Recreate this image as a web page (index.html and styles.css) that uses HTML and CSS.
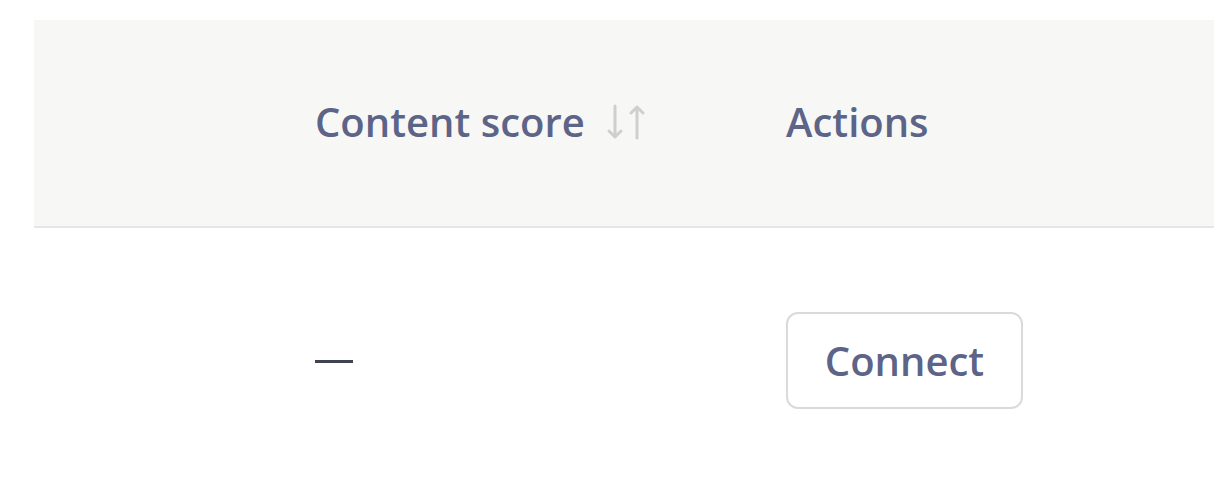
FILE: index.html
```html
<!DOCTYPE html>
<html>
<head>
<meta charset="utf-8">
<link rel="stylesheet" href="styles.css">
</head>
<body>
<div class="table">
  <div class="row head">
    <div class="cell spacer"></div>
    <div class="cell score-col">
      <span class="label">Content score</span>
      <svg class="sort" width="40" height="40" viewBox="0 0 40 40" fill="none" stroke="#cfcfcf" stroke-width="3" stroke-linecap="round" stroke-linejoin="round">
        <path d="M9 4 V35 M3 29 L9 35 L15 29"/>
        <path d="M31 36 V5 M25 11 L31 5 L37 11"/>
      </svg>
    </div>
    <div class="cell actions-col"><span class="label">Actions</span></div>
  </div>
  <div class="row body">
    <div class="cell spacer"></div>
    <div class="cell score-col"><span class="dash"></span></div>
    <div class="cell actions-col"><button class="btn">Connect</button></div>
  </div>
</div>
</body>
</html>
```
FILE: styles.css
```css
html, body {
  margin: 0;
  padding: 0;
  background: #ffffff;
}
body {
  font-family: "Open Sans", "Liberation Sans", sans-serif;
  padding: 20px 8px 0 34px;
}
.table {
  width: 1180px;
}
.row {
  display: grid;
  grid-template-columns: 281px 471px 1fr;
  align-items: center;
}
.head {
  height: 206px;
  background: #f7f7f5;
  border-bottom: 2px solid #e6e6e4;
}
.body {
  height: 264px;
}
.cell {
  display: flex;
  align-items: center;
}
.head .cell {
  margin-top: -4px;
}
.label {
  font-size: 40px;
  font-weight: 600;
  color: #5c6488;
  letter-spacing: 0;
}
.sort {
  margin-left: 21px;
  margin-top: 2px;
}
.dash {
  display: block;
  width: 38px;
  height: 3px;
  background: #3f4352;
  margin-top: 2px;
}
.btn {
  width: 237px;
  height: 97px;
  border: 2px solid #dadada;
  border-radius: 12px;
  background: #ffffff;
  font-family: "Open Sans", "Liberation Sans", sans-serif;
  font-size: 40px;
  font-weight: 600;
  color: #5c6488;
  padding: 0;
  margin-top: 0;
}
```
